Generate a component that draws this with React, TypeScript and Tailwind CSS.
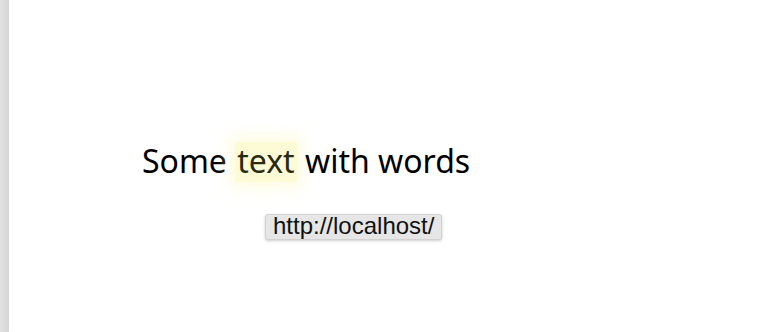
import React from 'react';

const App: React.FC = () => {
  return (
    <div className="flex h-[332px] w-[760px] overflow-hidden bg-white">
      <div className="w-[9px] shrink-0 bg-gradient-to-r from-[#e2e2e2] to-[#d6d6d6]" />
      <div className="relative flex-1 pl-[133px] pt-[141px]">
        <p
          className="text-[32px] leading-[40px] text-black"
          style={{ fontFamily: '"Noto Sans", sans-serif' }}
        >
          Some{' '}
          <span className="inline-block h-[40px] rounded-[2px] bg-[#fdfbd6] px-[2px] leading-[38px] text-[#2a2a12] shadow-[0_0_16px_6px_rgba(253,250,200,0.55)]">
            text
          </span>{' '}
          with words
        </p>
        <div
          className="absolute left-[256px] top-[214px] h-[26px] rounded-[3px] border border-[#d2d2d2] bg-[#e6e6e6] px-[7px] text-[24px] leading-[21px] text-[#111] shadow-[0_1px_3px_rgba(0,0,0,0.2)]"
          style={{ fontFamily: '"Liberation Sans", Arial, sans-serif' }}
        >
          http://localhost/
        </div>
      </div>
    </div>
  );
};

export default App;
